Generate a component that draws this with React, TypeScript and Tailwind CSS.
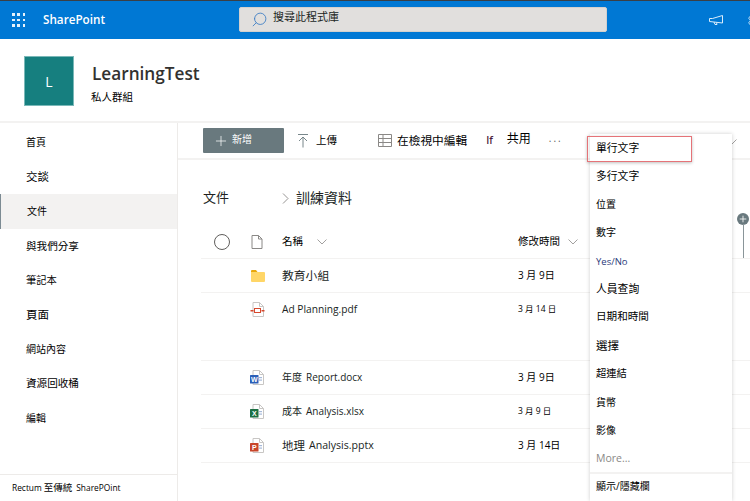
import React from "react";
import { Plus, Settings, Search } from "lucide-react";

const font = { fontFamily: '"Open Sans","Noto Sans CJK TC",sans-serif' };

const nav = [
  { t: "首頁", h: "h-[34px]", s: "text-[10px]" },
  { t: "交談", h: "h-[35px]", s: "text-[11.5px]" },
  { t: "文件", h: "h-[35px]", s: "text-[10px] bg-[#f3f2f1] border-l border-[#7c8b93] pl-[25px] pb-[1px]" },
  { t: "與我們分享", h: "h-[35px]", s: "text-[10.6px]" },
  { t: "筆記本", h: "h-[33px]", s: "text-[10.3px]" },
  { t: "頁面", h: "h-[35px]", s: "text-[11.5px]" },
  { t: "網站內容", h: "h-[34px]", s: "text-[10px]" },
  { t: "資源回收桶", h: "h-[35px]", s: "text-[10.6px]" },
  { t: "編輯", h: "h-[35px]", s: "text-[10px]" },
];

const menu = [
  { t: "單行文字", h: "h-[28px]", cls: "text-[10.8px]" },
  { t: "多行文字", h: "h-[28px]", cls: "text-[10.8px]" },
  { t: "位置", h: "h-[28px]", cls: "text-[10px]" },
  { t: "數字", h: "h-[28px]", cls: "text-[10px]" },
  { t: "Yes/No", h: "h-[30px]", cls: "text-[9.5px] text-[#2b3a7a] pt-[2px]" },
  { t: "人員查詢", h: "h-[27px]", cls: "text-[10.8px]" },
  { t: "日期和時間", h: "h-[28px]", cls: "text-[10.6px]" },
  { t: "選擇", h: "h-[29px]", cls: "text-[11.5px]" },
  { t: "超連結", h: "h-[28px]", cls: "text-[10.3px]" },
  { t: "貨幣", h: "h-[28px]", cls: "text-[10px]" },
  { t: "影像", h: "h-[29px]", cls: "text-[10px]" },
  { t: "More...", h: "h-[28px]", cls: "text-[10.5px] text-[#8a8886]" },
];

function PageIcon({ children }: { children?: React.ReactNode }) {
  return (
    <svg width="15" height="15" viewBox="0 0 15 15" fill="none">
      <path d="M3 .5h6.5L13.5 4.5v10H3z" fill="#fff" stroke="#c8c6c4" />
      <path d="M9.5 .5v4h4" stroke="#c8c6c4" />
      {children}
    </svg>
  );
}

const Folder = () => (
  <svg width="14" height="12" viewBox="0 0 14 12">
    <path d="M0 1a1 1 0 0 1 1-1h4l1.5 2H0z" fill="#e8a80c" />
    <path d="M0 2h13a1 1 0 0 1 1 1v8a1 1 0 0 1-1 1H1a1 1 0 0 1-1-1z" fill="#ffd667" />
  </svg>
);
const Pdf = () => (
  <PageIcon>
    <rect x="4.5" y="6.5" width="6" height="4" fill="#fff" stroke="#d6492f" />
    <rect x="0.5" y="8" width="3" height="1.5" fill="#d6492f" />
    <rect x="11.5" y="8" width="3" height="1.5" fill="#d6492f" />
  </PageIcon>
);
const Office = ({ c, l }: { c: string; l: string }) => (
  <PageIcon>
    <rect x="9" y="7" width="3" height="1.2" fill="#a6b9d9" />
    <rect x="9" y="9.5" width="3" height="1.2" fill="#a6b9d9" />
    <rect x="0" y="5" width="8.5" height="8.5" rx="0.5" fill={c} />
    <text x="4.25" y="11.7" fontSize="7" fontWeight="700" fill="#fff" textAnchor="middle" fontFamily="Liberation Sans">{l}</text>
  </PageIcon>
);

const Chevron = () => (
  <svg width="10" height="6" viewBox="0 0 10 6" fill="none">
    <path d="M.5 .5 5 5 9.5 .5" stroke="#8a8886" strokeWidth="0.8" />
  </svg>
);

const rows = [
  { icon: <Folder />, cjk: "教育小組", cs: "text-[11.8px]", lat: "", ls: "", date: "3 月 9日", h: "h-[34px]", ds: "text-[10px]" },
  { icon: <Pdf />, cjk: "", cs: "", lat: "Ad Planning.pdf", ls: "text-[10.2px]", date: "3 月 14 日", h: "h-[68px] pb-[34px]", ds: "text-[8.5px]" },
  { icon: <Office c="#2b5fb8" l="W" />, cjk: "年度", cs: "text-[10px]", lat: "Report.docx", ls: "text-[10px]", date: "3 月 9日", h: "h-[34px]", ds: "text-[10px]" },
  { icon: <Office c="#1d7044" l="X" />, cjk: "成本", cs: "text-[10px]", lat: "Analysis.xlsx", ls: "text-[10px]", date: "3 月 9 日", h: "h-[34px]", ds: "text-[8.5px]" },
  { icon: <Office c="#c8452a" l="P" />, cjk: "地理", cs: "text-[11.5px]", lat: "Analysis.pptx", ls: "text-[10.6px]", date: "3 月 14日", h: "h-[34px]", ds: "text-[10px]" },
];

export default function App() {
  return (
    <div style={font} className="relative w-[750px] h-[501px] overflow-hidden bg-white text-[#201f1e] flex flex-col">
      <div className="h-px shrink-0 bg-[#3a3f45]" />
      <header className="relative h-[38px] shrink-0 bg-[#0078d4] flex items-center text-white">
        <div className="ml-[12px] grid grid-cols-3 gap-[3px] w-[13px] shrink-0">
          {Array.from({ length: 9 }).map((_, i) => (
            <span key={i} className="w-[2.5px] h-[2.5px] bg-white/90" />
          ))}
        </div>
        <span className="ml-[18px] w-[63px] shrink-0 text-[11.7px] font-semibold">SharePoint</span>
        <div className="ml-[133px] mt-[-2px] w-[368px] h-[25px] shrink-0 bg-[#e1dfdd] rounded-[2px] border border-[#d2d0ce] flex items-center text-[#201f1e]">
          <Search size={17} className="ml-[11px] text-[#3f7fc4] -scale-x-100" strokeWidth={1.25} />
          <span className="ml-[5px] text-[11px] mt-[-3px]">搜尋此程式庫</span>
        </div>
        <svg width="14" height="10" viewBox="0 0 14 10" fill="none" className="ml-[102px] shrink-0" stroke="#d9ecfb">
          <path d="M.5 3.5h3l10-3v7.5l-13-1.5z" />
          <path d="M5 7l1 2.5h2L7.5 7.5" />
        </svg>
        <Settings size={15} strokeWidth={1.5} className="ml-[24px] shrink-0 text-[#d9ecfb]" />
      </header>

      <div className="h-[84px] shrink-0 flex border-b-2 border-[#f3f2f1]">
        <div className="ml-[24px] mt-[17px] w-[50px] h-[50px] bg-[#167f7f] border border-[#7ab8b8] flex items-center justify-center text-white text-[14px]">
          L
        </div>
        <div className="ml-[18px] mt-[22px]">
          <div className="text-[17.2px] leading-[26px] font-semibold text-[#323130]">LearningTest</div>
          <div className="text-[10.5px] leading-[14px] mt-[3px] ml-[-1px] text-black">私人群組</div>
        </div>
      </div>

      <div className="flex-1 flex min-h-0">
        <nav className="w-[178px] shrink-0 border-r border-[#edebe9] flex flex-col text-black">
          <div className="pt-[2px]">
            {nav.map((n) => (
              <div key={n.t} className={`${n.h} ${n.s} flex items-center pl-[26px]`}>
                {n.t}
              </div>
            ))}
          </div>
          <div className="mt-auto h-[27px] border-t border-[#edebe9] flex items-center pl-[12px] text-[8.4px] whitespace-nowrap">
            <span>Rectum</span>
            <span className="ml-[2px] text-[9.5px]">至傳統</span>
            <span className="ml-[4px]">SharePOint</span>
          </div>
        </nav>

        <main className="flex-1 min-w-0 flex flex-col">
          <div className="h-[37px] shrink-0 border-b-2 border-[#f3f2f1] flex items-center text-black">
            <div className="ml-[25px] w-[81px] h-[25px] bg-[#69797e] rounded-[1px] flex items-center text-white text-[10px]">
              <Plus size={16} strokeWidth={1.1} className="ml-[10px]" />
              <span className="ml-[3px] mt-[-3px]">新增</span>
            </div>
            <svg width="12" height="14" viewBox="0 0 12 14" fill="none" className="ml-[13px]" stroke="#69797e" strokeWidth="0.9">
              <path d="M1 .5h10M6 13.5V3.5M2 7l4-4 4 4" />
            </svg>
            <span className="ml-[7px] text-[10.5px]">上傳</span>
            <svg width="14" height="13" viewBox="0 0 14 13" fill="none" className="ml-[41px]" stroke="#8a8886">
              <path d="M.5 .5h13v12H.5zM.5 4.5h13M.5 8.5h13M5 .5v12" />
            </svg>
            <span className="ml-[5px] text-[11.7px]">在檢視中編輯</span>
            <span className="ml-[19px] text-[10px] font-semibold text-[#4b1d3a]">If</span>
            <span className="ml-[14px] text-[12px] mt-[-3px]">共用</span>
            <span className="ml-[18px] text-[10px] tracking-[2px] text-[#605e5c] mt-[-4px]">...</span>
          </div>

          <div className="ml-[25px] mt-[27px] h-[22px] flex items-center text-[13px] text-[#201f1e]">
            <span>文件</span>
            <svg width="7" height="11" viewBox="0 0 7 11" fill="none" className="ml-[53px]">
              <path d="M1 .5 6 5.5 1 10.5" stroke="#8a8886" strokeWidth="0.9" />
            </svg>
            <span className="ml-[7px] text-[14px] mt-[-2px]">訓練資料</span>
          </div>

          <div className="ml-[23px] mt-[22px] h-[28px] pb-[6px] border-b border-[#f3f2f1] flex items-center text-[10.5px] text-black">
            <div className="ml-[13px] w-[16px] h-[16px] rounded-full border border-[#605e5c]" />
            <svg width="12" height="14" viewBox="0 0 12 14" fill="none" className="ml-[21px]">
              <path d="M1 .5h6.5L11 4v9.5H1z" stroke="#8a8886" />
              <path d="M7.5.5V4H11" stroke="#8a8886" />
            </svg>
            <span className="ml-[19px]">名稱</span>
            <span className="ml-[14px]"><Chevron /></span>
            <span className="ml-[191px]">修改時間</span>
            <span className="ml-[8px]"><Chevron /></span>
          </div>

          {rows.map((r) => (
            <div key={r.cjk + r.lat} className={`ml-[23px] ${r.h} border-b border-[#f3f2f1] flex items-center text-black`}>
              <div className="ml-[49px] w-[15px] flex justify-center">{r.icon}</div>
              <div className="ml-[17px] w-[236px] flex items-center text-[#201f1e]">
                {r.cjk && <span className={r.cs}>{r.cjk}</span>}
                {r.lat && <span className={`${r.ls} ${r.cjk ? "ml-[4px]" : ""} whitespace-nowrap`}>{r.lat}</span>}
              </div>
              <span className={`${r.ds} text-black`}>{r.date}</span>
            </div>
          ))}
        </main>
      </div>

      {/* column add */}
      <div className="absolute left-[737px] top-[213px] w-[12px] h-[12px] rounded-full bg-[#69797e] flex items-center justify-center text-white">
        <Plus size={10} strokeWidth={2} />
      </div>
      <div className="absolute left-[743px] top-[224px] w-px h-[34px] bg-[#8a9599]" />
      <svg width="10" height="6" viewBox="0 0 10 6" fill="none" className="absolute left-[727px] top-[139px]">
        <path d="M.5 .5 5 5 9.5 .5" stroke="#8a8886" strokeWidth="0.8" />
      </svg>

      {/* dropdown */}
      <div className="absolute left-[590px] top-[134px] w-[142px] h-[367px] bg-white shadow-[0_0_4px_rgba(0,0,0,0.2)] flex flex-col text-black">
        {menu.map((m) => (
          <div key={m.t} className={`${m.h} ${m.cls} shrink-0 flex items-center pl-[6px]`}>
            {m.t}
          </div>
        ))}
        <div className="mt-[-1px] border-t-2 border-[#f3f2f1] h-[27px] flex items-center pl-[6px] text-[10px]">顯示/隱藏欄</div>
      </div>
      <div className="absolute left-[587px] top-[136px] w-[105px] h-[26px] border-[1.5px] border-[#e57378] shadow-[0_1px_3px_rgba(0,0,0,0.25)]" />
    </div>
  );
}
